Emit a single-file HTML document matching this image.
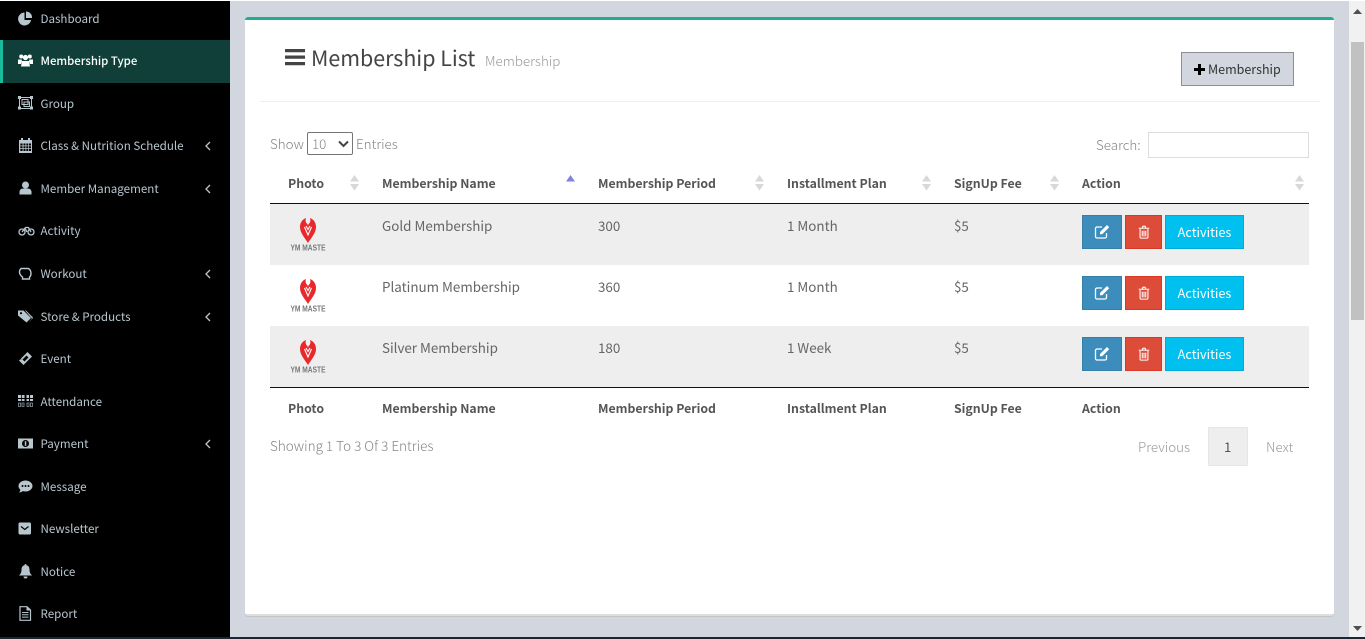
<!DOCTYPE html>
<html><head><meta charset="utf-8"><title>Membership List</title>
<style>
html,body{margin:0;padding:0;width:1365px;height:639px;overflow:hidden;background:#d2d6de}
body{position:relative;font-family:"Noto Sans CJK JP","Liberation Sans",sans-serif;font-size:13px;color:#555}
.a{position:absolute;white-space:nowrap;line-height:20px}
.box{position:absolute}
.nav{position:absolute;left:40.500px;color:#b8c7ce;font-size:11.600px;line-height:20px;white-space:nowrap}
.ic{position:absolute;left:18px;width:15px;height:15px;fill:#b8c7ce;stroke:none}
.ch{position:absolute;left:205px;width:6px;height:10px;fill:none;stroke:#b8c7ce;stroke-width:1.300}
.th{font-weight:700;color:#555;font-size:12.300px}
.td{color:#666;font-size:13.400px;margin-top:-1px}
.l{font-size:13.400px;color:#858585;font-weight:300;margin-top:-1px}
.btn{position:absolute;height:34px;box-sizing:border-box;color:#fff;text-align:center;line-height:32px}
.e{left:1082px;width:40px;background:#3c8dbc;border:1px solid #367fa9}
.d{left:1125px;width:37px;background:#dd4b39;border:1px solid #d73925}
.v{left:1165px;width:79px;background:#00c0ef;border:1px solid #00acd6;font-size:12.700px}
.btn svg{position:absolute;left:50%;top:50%;width:16px;height:16px;margin:-8px 0 0 -8px}
.d svg{width:14px;height:14px;margin:-7px 0 0 -7px}
.s{position:absolute;width:9px;height:16px}
.logo{position:absolute;left:289px;width:38px;height:40px;filter:blur(.35px)}
</style></head><body>
<div class="box" style="left:0;top:0;width:1365px;height:1px;background:#fff"></div>
<div class="box" style="left:0;top:1px;width:230px;height:636px;background:#000"></div>
<div class="box" style="left:0;top:40px;width:230px;height:43px;background:#0f3f38"></div>
<div class="box" style="left:0;top:40px;width:3px;height:43px;background:#1abb9c"></div>

<svg class="ic" style="top:11px" viewBox="0 0 15 15"><path d="M6.500 1.500a6.500 6.500 0 1 0 6.500 7.500H6.500z"/><path d="M8 0.500a6 6 0 0 1 6 6.500H8z"/></svg>
<div class="nav" style="top:9px">Dashboard</div>

<svg class="ic" style="top:53px;fill:#fff" viewBox="0 0 15 15"><circle cx="3.200" cy="3.500" r="2"/><circle cx="11.800" cy="3.500" r="2"/><circle cx="7.500" cy="4.500" r="2.600"/><path d="M0 6.500h3.500l.5 1.500-1 3H0zM15 6.500h-3.500L11 8l1 3h3zM4 8h7l1 5.500H3z"/></svg>
<div class="nav" style="top:51px;color:#fff;font-weight:500;font-size:11.400px">Membership Type</div>

<svg class="ic" style="top:96px" viewBox="0 0 15 15"><path fill="none" stroke="#b8c7ce" d="M1.500 1.500h12v11h-12z"/><path d="M0 0h3v3H0zM12 0h3v3h-3zM0 10.500h3v3H0zM12 10.500h3v3h-3z"/><path fill="none" stroke="#b8c7ce" d="M4 3.500h6v5H4zM6 6h5.500v4.500H6z"/></svg>
<div class="nav" style="top:94px">Group</div>

<svg class="ic" style="top:138px" viewBox="0 0 15 15"><path d="M3 0h2v2h5V0h2v2h2v13H1V2h2z"/><path fill="#000" d="M2.300 5.500h2.300v2H2.300zM5.500 5.500h2v2h-2zM8.300 5.500h2v2h-2zM11 5.500h2v2h-2zM2.300 8.300h2.300v2H2.300zM5.500 8.300h2v2h-2zM8.300 8.300h2v2h-2zM11 8.300h2v2h-2zM2.300 11h2.300v2H2.300zM5.500 11h2v2h-2zM8.300 11h2v2h-2zM11 11h2v2h-2z"/></svg>
<div class="nav" style="top:136px">Class &amp; Nutrition Schedule</div>
<svg class="ch" style="top:141px" viewBox="0 0 6 10"><path d="M5 1 1 5l4 4"/></svg>

<svg class="ic" style="top:181px" viewBox="0 0 15 15"><circle cx="7.500" cy="4" r="3.500"/><path d="M1.500 13.500V11c0-2 1.500-3.500 3.500-3.500h5c2 0 3.500 1.500 3.500 3.500v2.500z"/></svg>
<div class="nav" style="top:179px">Member Management</div>
<svg class="ch" style="top:184px" viewBox="0 0 6 10"><path d="M5 1 1 5l4 4"/></svg>

<svg class="ic" style="top:223px;width:17px" viewBox="0 0 17 15"><g fill="none" stroke="#b8c7ce" stroke-width="1.300"><circle cx="4" cy="9" r="3"/><circle cx="13" cy="9" r="3"/><path d="M4 9 7.500 4.500h3L13 9M7 5l2 4"/></g></svg>
<div class="nav" style="top:221px">Activity</div>

<svg class="ic" style="top:266px" viewBox="0 0 15 15"><path fill="none" stroke="#b8c7ce" stroke-width="1.400" d="M3 2.500h7.500c1.500 1 2.500 2.500 2.500 5 0 2-.8 3-1.500 3.500v2H4.500v-2C2.500 9.500 1.500 8 1.500 6 1.500 4.500 2 3.500 3 2.500z"/></svg>
<div class="nav" style="top:264px">Workout</div>
<svg class="ch" style="top:269px" viewBox="0 0 6 10"><path d="M5 1 1 5l4 4"/></svg>

<svg class="ic" style="top:309px" viewBox="0 0 15 15"><path d="M0 1.500h5.500L13 9l-4.500 4.500L0 6.500z"/><path d="M8 1.500 14.500 8c.5.500.5 1 0 1.500L10.500 13.500 14 9.500 7 1.500z"/><circle cx="3" cy="4.200" r="1.100" fill="#000"/></svg>
<div class="nav" style="top:307px">Store &amp; Products</div>
<svg class="ch" style="top:312px" viewBox="0 0 6 10"><path d="M5 1 1 5l4 4"/></svg>

<svg class="ic" style="top:351px" viewBox="0 0 15 15"><path d="M9.500 1 14 5.500 5.500 14 1 9.500l1.300-1.300 1.200.5-.5-1.200z"/><path fill="#000" d="m8.500 4.500 2 2-4 4-2-2z"/></svg>
<div class="nav" style="top:349px">Event</div>

<svg class="ic" style="top:394px" viewBox="0 0 15 15"><path d="M0 1h3v3H0zM3.800 1h2.700v3H3.800zM8.500 1h2.500v3H8.500zM12 1h3v3h-3zM0 5h3v2H0zM3.800 5h2.700v2H3.800zM8.500 5h2.500v2H8.500zM12 5h3v2h-3z"/><g fill="none" stroke="#8a979d" stroke-width=".8"><path d="M.5 9h2v3.500h-2zM4 9h2v3.500H4zM9 9h2v3.500H9zM12.500 9h2v3.500h-2z"/></g></svg>
<div class="nav" style="top:392px">Attendance</div>

<svg class="ic" style="top:436px" viewBox="0 0 15 15"><path d="M0 2.500h15v10H0z"/><circle cx="7.500" cy="7.500" r="3.500" fill="#000"/><rect x="6.800" y="5.200" width="1.500" height="4.600"/></svg>
<div class="nav" style="top:434px">Payment</div>
<svg class="ch" style="top:439px" viewBox="0 0 6 10"><path d="M5 1 1 5l4 4"/></svg>

<svg class="ic" style="top:479px" viewBox="0 0 15 15"><path d="M7.500 1.500C11.500 1.500 14.500 4 14.500 7s-3 5.500-7 5.500c-1 0-2-.2-2.800-.4C3.500 13 2.500 13.500 1 13.500c.8-.8 1.200-1.700 1.300-2.800C1.200 9.700.5 8.400.5 7c0-3 3-5.500 7-5.500z"/><circle cx="4.500" cy="7" r="1" fill="#000"/><circle cx="7.500" cy="7" r="1" fill="#000"/><circle cx="10.500" cy="7" r="1" fill="#000"/></svg>
<div class="nav" style="top:477px">Message</div>

<svg class="ic" style="top:521px" viewBox="0 0 15 15"><path d="M2 1.500h9.500a1.500 1.500 0 0 1 1.500 1.500v9a1.500 1.500 0 0 1-1.500 1.500H2A1.500 1.500 0 0 1 .5 12V3A1.500 1.500 0 0 1 2 1.500z"/><path fill="none" stroke="#000" stroke-width="1.200" d="M3 5.500 6.800 8.500 10.500 5.500"/></svg>
<div class="nav" style="top:519px">Newsletter</div>

<svg class="ic" style="top:564px" viewBox="0 0 15 15"><path d="M7.500 0c.7 0 1 .5 1 1.200 2 .5 3 2 3 4.300 0 3 1 4.500 2.500 6H1c1.500-1.500 2.500-3 2.500-6 0-2.300 1-3.800 3-4.300C6.500.500 6.800 0 7.500 0zM5.500 12.500h4a2 2 0 0 1-4 0z"/></svg>
<div class="nav" style="top:562px">Notice</div>

<svg class="ic" style="top:606px" viewBox="0 0 15 15"><path fill="none" stroke="#b8c7ce" stroke-width="1.200" d="M2 .7h7L12.500 4v10.300H2z"/><path d="M8.500.7 12.500 4.500h-4zM4 6h6.500v1H4zM4 8.300h6.500v1H4zM4 10.600h6.500v1H4z"/></svg>
<div class="nav" style="top:604px">Report</div>

<!-- card -->
<div class="box" style="left:245px;top:17px;width:1089px;height:599px;background:#fff;border-top:3px solid #1fae92;box-sizing:border-box;border-radius:3px;border-bottom:2px solid #dedede;box-shadow:0 1px 0 #c4c4c4"></div>
<svg class="box" style="left:285px;top:49px" width="20" height="17" viewBox="0 0 20 17"><path fill="#444" d="M0 0h20v3.200H0zM0 6.500h20v3.200H0zM0 13h20v3.200H0z"/></svg>
<div class="a" style="left:311px;top:46px;font-size:21.400px;line-height:24px;color:#444">Membership List</div>
<div class="a l" style="left:485px;top:51px;color:#999">Membership</div>
<div class="box" style="left:1181px;top:52px;width:113px;height:34px;background:#d2d6de;border:1px solid #8d8d92;box-sizing:border-box"></div>
<svg class="box" style="left:1194px;top:64px" width="11" height="11" viewBox="0 0 11 11"><path d="M4 0h3v4h4v3H7v4H4V7H0V4h4z"/></svg>
<div class="a" style="left:1208px;top:59px;color:#333;font-size:12.500px">Membership</div>
<div class="box" style="left:260px;top:101px;width:1060px;height:1px;background:#eee"></div>

<div class="a l" style="left:270px;top:134px">Show</div>
<div class="box" style="left:307px;top:132px;width:46px;height:23px;border:1px solid #767676;border-radius:2px;box-sizing:border-box"></div>
<div class="a l" style="left:312px;top:134px">10</div>
<svg class="box" style="left:338px;top:140px" width="11" height="8" viewBox="0 0 11 8"><path fill="none" stroke="#444" stroke-width="2" d="M1 1.500 5.500 6 10 1.500"/></svg>
<div class="a l" style="left:356px;top:134px">Entries</div>
<div class="a l" style="left:1096px;top:135px">Search:</div>
<div class="box" style="left:1148px;top:132px;width:161px;height:26px;border:1px solid #ddd;box-sizing:border-box"></div>

<div class="a th" style="left:288px;top:173px">Photo</div>
<div class="a th" style="left:382px;top:173px">Membership Name</div>
<div class="a th" style="left:598px;top:173px">Membership Period</div>
<div class="a th" style="left:787px;top:173px">Installment Plan</div>
<div class="a th" style="left:954px;top:173px">SignUp Fee</div>
<div class="a th" style="left:1082px;top:173px">Action</div>
<svg class="s" style="left:350px;top:175px" viewBox="0 0 9 16"><path fill="#d8d8d8" d="M4.500 0 9 6.500H0zM0 9h9l-4.500 6.500z"/></svg>
<svg class="s" style="left:566px;top:175px" viewBox="0 0 9 16"><path fill="#8383dc" d="M4.500 0 9 6.500H0z"/></svg>
<svg class="s" style="left:755px;top:175px" viewBox="0 0 9 16"><path fill="#d8d8d8" d="M4.500 0 9 6.500H0zM0 9h9l-4.500 6.500z"/></svg>
<svg class="s" style="left:922px;top:175px" viewBox="0 0 9 16"><path fill="#d8d8d8" d="M4.500 0 9 6.500H0zM0 9h9l-4.500 6.500z"/></svg>
<svg class="s" style="left:1050px;top:175px" viewBox="0 0 9 16"><path fill="#d8d8d8" d="M4.500 0 9 6.500H0zM0 9h9l-4.500 6.500z"/></svg>
<svg class="s" style="left:1295px;top:175px" viewBox="0 0 9 16"><path fill="#d8d8d8" d="M4.500 0 9 6.500H0zM0 9h9l-4.500 6.500z"/></svg>

<div class="box" style="left:270px;top:203px;width:1039px;height:1px;background:#111"></div>
<div class="box" style="left:270px;top:204px;width:1039px;height:61px;background:#eee"></div>
<div class="box" style="left:270px;top:326px;width:1039px;height:61px;background:#eee"></div>
<div class="box" style="left:270px;top:387px;width:1039px;height:1px;background:#111"></div>

<!-- row 1 -->
<svg class="logo" style="top:216px" viewBox="0 0 38 40"><path fill="#e8282a" d="M19 27C16 22 11 17 11 11 11 6 14 3 17 2 16 5 17 7 18.500 8L19 10 19.500 8C21 7 22 5 21 2 24 3 27 6 27 11 27 17 22 22 19 27z"/><path fill="none" stroke="#fff" stroke-width="1.100" d="M15.500 11 19 19 22.500 11M17 10l2 3.500 2-3.500"/><text x="19" y="34.500" text-anchor="middle" font-family="Liberation Sans" font-size="8" font-weight="700" fill="#777" textLength="35" lengthAdjust="spacingAndGlyphs">YM MASTE</text></svg>
<div class="a td" style="left:382px;top:216px">Gold Membership</div>
<div class="a td" style="left:598px;top:216px">300</div>
<div class="a td" style="left:787px;top:216px">1 Month</div>
<div class="a td" style="left:954px;top:216px">$5</div>
<div class="btn e" style="top:215px"><svg viewBox="0 0 16 16"><path fill="none" stroke="#fff" stroke-width="1.300" d="M8 3H3a1.500 1.500 0 0 0-1.500 1.500v8A1.500 1.500 0 0 0 3 14h8a1.500 1.500 0 0 0 1.500-1.500V9"/><path fill="#fff" d="M13 1l2.200 2.200-7 7H6V8z"/></svg></div>
<div class="btn d" style="top:215px"><svg viewBox="0 0 16 16"><path fill="none" stroke="#fff" stroke-width="1.200" d="M3.500 4.500v9.500a1 1 0 0 0 1 1h7a1 1 0 0 0 1-1V4.500M2 3.700h12M6 3.500l.7-2h2.600l.7 2M6 6.500v6.500M8 6.500v6.500M10 6.500v6.500"/></svg></div>
<div class="btn v" style="top:215px">Activities</div>

<!-- row 2 -->
<svg class="logo" style="top:277px" viewBox="0 0 38 40"><path fill="#e8282a" d="M19 27C16 22 11 17 11 11 11 6 14 3 17 2 16 5 17 7 18.500 8L19 10 19.500 8C21 7 22 5 21 2 24 3 27 6 27 11 27 17 22 22 19 27z"/><path fill="none" stroke="#fff" stroke-width="1.100" d="M15.500 11 19 19 22.500 11M17 10l2 3.500 2-3.500"/><text x="19" y="34.500" text-anchor="middle" font-family="Liberation Sans" font-size="8" font-weight="700" fill="#777" textLength="35" lengthAdjust="spacingAndGlyphs">YM MASTE</text></svg>
<div class="a td" style="left:382px;top:277px">Platinum Membership</div>
<div class="a td" style="left:598px;top:277px">360</div>
<div class="a td" style="left:787px;top:277px">1 Month</div>
<div class="a td" style="left:954px;top:277px">$5</div>
<div class="btn e" style="top:276px"><svg viewBox="0 0 16 16"><path fill="none" stroke="#fff" stroke-width="1.300" d="M8 3H3a1.500 1.500 0 0 0-1.500 1.500v8A1.500 1.500 0 0 0 3 14h8a1.500 1.500 0 0 0 1.500-1.500V9"/><path fill="#fff" d="M13 1l2.200 2.200-7 7H6V8z"/></svg></div>
<div class="btn d" style="top:276px"><svg viewBox="0 0 16 16"><path fill="none" stroke="#fff" stroke-width="1.200" d="M3.500 4.500v9.500a1 1 0 0 0 1 1h7a1 1 0 0 0 1-1V4.500M2 3.700h12M6 3.500l.7-2h2.600l.7 2M6 6.500v6.500M8 6.500v6.500M10 6.500v6.500"/></svg></div>
<div class="btn v" style="top:276px">Activities</div>

<!-- row 3 -->
<svg class="logo" style="top:338px" viewBox="0 0 38 40"><path fill="#e8282a" d="M19 27C16 22 11 17 11 11 11 6 14 3 17 2 16 5 17 7 18.500 8L19 10 19.500 8C21 7 22 5 21 2 24 3 27 6 27 11 27 17 22 22 19 27z"/><path fill="none" stroke="#fff" stroke-width="1.100" d="M15.500 11 19 19 22.500 11M17 10l2 3.500 2-3.500"/><text x="19" y="34.500" text-anchor="middle" font-family="Liberation Sans" font-size="8" font-weight="700" fill="#777" textLength="35" lengthAdjust="spacingAndGlyphs">YM MASTE</text></svg>
<div class="a td" style="left:382px;top:338px">Silver Membership</div>
<div class="a td" style="left:598px;top:338px">180</div>
<div class="a td" style="left:787px;top:338px">1 Week</div>
<div class="a td" style="left:954px;top:338px">$5</div>
<div class="btn e" style="top:337px"><svg viewBox="0 0 16 16"><path fill="none" stroke="#fff" stroke-width="1.300" d="M8 3H3a1.500 1.500 0 0 0-1.500 1.500v8A1.500 1.500 0 0 0 3 14h8a1.500 1.500 0 0 0 1.500-1.500V9"/><path fill="#fff" d="M13 1l2.200 2.200-7 7H6V8z"/></svg></div>
<div class="btn d" style="top:337px"><svg viewBox="0 0 16 16"><path fill="none" stroke="#fff" stroke-width="1.200" d="M3.500 4.500v9.500a1 1 0 0 0 1 1h7a1 1 0 0 0 1-1V4.500M2 3.700h12M6 3.500l.7-2h2.600l.7 2M6 6.500v6.500M8 6.500v6.500M10 6.500v6.500"/></svg></div>
<div class="btn v" style="top:337px">Activities</div>

<div class="a th" style="left:288px;top:398px">Photo</div>
<div class="a th" style="left:382px;top:398px">Membership Name</div>
<div class="a th" style="left:598px;top:398px">Membership Period</div>
<div class="a th" style="left:787px;top:398px">Installment Plan</div>
<div class="a th" style="left:954px;top:398px">SignUp Fee</div>
<div class="a th" style="left:1082px;top:398px">Action</div>

<div class="a l" style="left:270px;top:436px;font-size:13.500px">Showing 1 To 3 Of 3 Entries</div>
<div class="a l" style="left:1138px;top:437px;color:#999">Previous</div>
<div class="box" style="left:1208px;top:427px;width:40px;height:39px;background:#eee;border:1px solid #e6e6e6;box-sizing:border-box"></div>
<div class="a" style="left:1224px;top:437px;font-size:13.200px;color:#555">1</div>
<div class="a l" style="left:1266px;top:437px;color:#999">Next</div>

<!-- scrollbar -->
<div class="box" style="left:1349px;top:1px;width:16px;height:636px;background:#f1f1f1"></div>
<div class="box" style="left:1351px;top:42px;width:13px;height:278px;background:#c1c1c1"></div>
<svg class="box" style="left:1353px;top:9px" width="9" height="5" viewBox="0 0 9 5"><path fill="#505050" d="M4.500 0 9 5H0z"/></svg>
<svg class="box" style="left:1353px;top:626px" width="9" height="5" viewBox="0 0 9 5"><path fill="#505050" d="M0 0h9L4.500 5z"/></svg>
<div class="box" style="left:0;top:637px;width:1365px;height:2px;background:#1c2530"></div>
</body></html>
